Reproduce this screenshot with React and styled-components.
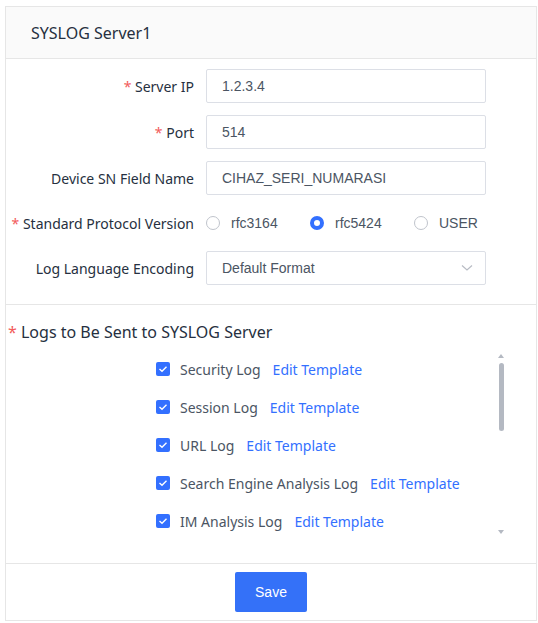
import styled, { createGlobalStyle } from 'styled-components';

const GlobalStyle = createGlobalStyle`
  body {
    margin: 0;
    background: #ffffff;
    font-family: 'Noto Sans', 'Liberation Sans', Arial, sans-serif;
  }
`;

const logTypes = [
  'Security Log',
  'Session Log',
  'URL Log',
  'Search Engine Analysis Log',
  'IM Analysis Log',
];

const protocols = [
  { value: 'rfc3164', checked: false },
  { value: 'rfc5424', checked: true },
  { value: 'USER', checked: false },
];

export default function App() {
  return (
    <>
      <GlobalStyle />
      <Page>
        <Panel>
          <Header>SYSLOG Server1</Header>

          <Form>
            <Row>
              <Label required>Server IP</Label>
              <TextInput defaultValue="1.2.3.4" />
            </Row>
            <Row>
              <Label required>Port</Label>
              <TextInput defaultValue="514" />
            </Row>
            <Row>
              <Label>Device SN Field Name</Label>
              <TextInput defaultValue="CIHAZ_SERI_NUMARASI" />
            </Row>
            <Row short>
              <Label required>Standard Protocol Version</Label>
              <RadioGroup>
                {protocols.map((p) => (
                  <RadioOption key={p.value}>
                    <RadioDot checked={p.checked} />
                    {p.value}
                  </RadioOption>
                ))}
              </RadioGroup>
            </Row>
            <Row>
              <Label>Log Language Encoding</Label>
              <Select>
                Default Format
                <svg width="12" height="8" viewBox="0 0 12 8">
                  <path d="M1 1.5 L6 6 L11 1.5" fill="none" stroke="#b8bcc4" strokeWidth="1.2" />
                </svg>
              </Select>
            </Row>
          </Form>

          <LogSection>
            <SectionTitle>Logs to Be Sent to SYSLOG Server</SectionTitle>
            <ListViewport>
              <LogList>
                {logTypes.map((name) => (
                  <LogItem key={name}>
                    <CheckBox>
                      <svg width="10" height="8" viewBox="0 0 10 8">
                        <path d="M1.5 4 L4 6.2 L8.5 1.8" fill="none" stroke="#ffffff" strokeWidth="1.4" />
                      </svg>
                    </CheckBox>
                    <LogName>{name}</LogName>
                    <EditLink href="#">Edit Template</EditLink>
                  </LogItem>
                ))}
              </LogList>
              <ScrollBar>
                <ScrollArrow />
                <ScrollThumb />
                <ScrollArrow down />
              </ScrollBar>
            </ListViewport>
          </LogSection>

          <Footer>
            <SaveButton>Save</SaveButton>
          </Footer>
        </Panel>
      </Page>
    </>
  );
}

const Page = styled.div`
  padding: 6px 1px 2px 5px;
`;

const Panel = styled.div`
  width: 532px;
  box-sizing: border-box;
  border: 1px solid #e6e6e6;
  background: #ffffff;
`;

const Header = styled.div`
  height: 51px;
  padding-left: 25px;
  display: flex;
  align-items: center;
  background: #fafafa;
  border-bottom: 1px solid #e6e6e6;
  font-size: 16px;
  color: #263040;
`;

const Form = styled.div`
  display: flex;
  flex-direction: column;
  gap: 12px;
  padding: 10px 0 19px;
`;

const Row = styled.div`
  display: flex;
  align-items: center;
  gap: 12px;
  height: ${(props) => (props.short ? '32px' : '34px')};
`;

const Label = styled.div`
  width: 188px;
  flex: none;
  text-align: right;
  font-size: 14px;
  color: #263040;
  white-space: nowrap;

  &::before {
    content: ${(props) => (props.required ? "'* '" : 'none')};
    color: #f25b5b;
  }
`;

const TextInput = styled.input`
  width: 280px;
  height: 34px;
  box-sizing: border-box;
  padding: 0 15px;
  border: 1px solid #dcdfe6;
  border-radius: 2px;
  font-family: 'Liberation Sans', Arial, sans-serif;
  font-size: 14px;
  color: #4b5563;
  outline: none;
`;

const Select = styled.div`
  width: 280px;
  height: 34px;
  box-sizing: border-box;
  padding: 0 12px 0 15px;
  display: flex;
  align-items: center;
  justify-content: space-between;
  border: 1px solid #dcdfe6;
  border-radius: 2px;
  font-family: 'Liberation Sans', Arial, sans-serif;
  font-size: 14px;
  color: #4b5563;
`;

const RadioGroup = styled.div`
  display: flex;
`;

const RadioOption = styled.label`
  width: 104px;
  display: flex;
  align-items: center;
  gap: 11px;
  font-family: 'Liberation Sans', Arial, sans-serif;
  font-size: 14px;
  color: #4b5563;
`;

const RadioDot = styled.span`
  width: 14px;
  height: 14px;
  box-sizing: border-box;
  border-radius: 50%;
  border: ${(props) => (props.checked ? '4.5px solid #3370ff' : '1px solid #c0c4cc')};
  background: #ffffff;
`;

const LogSection = styled.div`
  border-top: 1px solid #e6e6e6;
  padding-bottom: 23px;
`;

const SectionTitle = styled.div`
  height: 45px;
  padding: 8px 0 0 2px;
  box-sizing: border-box;
  display: flex;
  align-items: center;
  font-size: 16px;
  color: #263040;

  &::before {
    content: '* ';
    white-space: pre;
    color: #f25b5b;
  }
`;

const ListViewport = styled.div`
  position: relative;
  height: 190px;
  margin-left: 150px;
  width: 350px;
  overflow: hidden;
`;

const LogList = styled.div`
  display: flex;
  flex-direction: column;
`;

const LogItem = styled.div`
  height: 38px;
  flex: none;
  display: flex;
  align-items: center;
`;

const CheckBox = styled.span`
  width: 14px;
  height: 14px;
  border-radius: 2px;
  background: #3370ff;
  display: flex;
  align-items: center;
  justify-content: center;
  margin-right: 10px;
`;

const LogName = styled.span`
  font-size: 14px;
  color: #4b5563;
  margin-right: 12px;
`;

const EditLink = styled.a`
  font-size: 14px;
  color: #3370ff;
  text-decoration: none;
`;

const ScrollBar = styled.div`
  position: absolute;
  top: 4px;
  right: 2px;
  width: 6px;
  height: 180px;
  display: flex;
  flex-direction: column;
  align-items: center;
`;

const ScrollArrow = styled.span`
  width: 0;
  height: 0;
  border-left: 3px solid transparent;
  border-right: 3px solid transparent;
  ${(props) =>
    props.down
      ? 'border-top: 4px solid #b4b9c2; margin-top: auto;'
      : 'border-bottom: 4px solid #b4b9c2;'}
`;

const ScrollThumb = styled.span`
  width: 5px;
  height: 68px;
  margin-top: 5px;
  border-radius: 3px;
  background: #b4b9c2;
`;

const Footer = styled.div`
  border-top: 1px solid #e6e6e6;
  padding: 8px 0;
  display: flex;
  justify-content: center;
`;

const SaveButton = styled.button`
  width: 72px;
  height: 40px;
  border: none;
  border-radius: 2px;
  background: #3471f8;
  color: #ffffff;
  font-family: 'Liberation Sans', Arial, sans-serif;
  font-size: 14px;
  cursor: pointer;
`;
